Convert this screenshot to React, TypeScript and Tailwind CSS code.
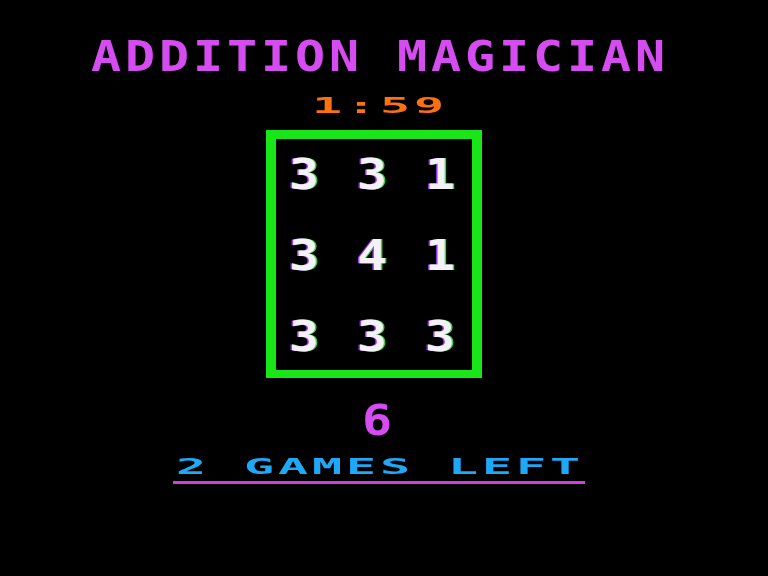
import React from "react";

const mono = "font-['DejaVu_Sans_Mono','Liberation_Mono',monospace] font-bold";

function Row({ text }: { text: string }) {
  return (
    <div className="h-[43px]">
      <div
        className={`${mono} origin-top scale-y-[0.86] text-[50px] leading-none tracking-[3.9px] text-[#f4f2f6] [text-shadow:-1.5px_0_0_#9a3cff,1.5px_0_0_#38d838] whitespace-pre`}
      >
        {text}
      </div>
    </div>
  );
}

export default function App() {
  return (
    <div className="w-[768px] h-[576px] bg-black overflow-hidden">
      <div className="flex flex-col items-center pr-[8px] blur-[0.4px]">
        <div className="mt-[35px] h-[43px]">
          <div
            className={`${mono} origin-top scale-y-[0.86] text-[50px] leading-none tracking-[3.9px] text-[#d54cf0] whitespace-pre`}
          >
            ADDITION MAGICIAN
          </div>
        </div>

        <div className="mt-[16.5px] h-[21.5px]">
          <div
            className={`${mono} origin-top scale-y-[0.43] text-[50px] leading-none tracking-[3.9px] text-[#ff7012]`}
          >
            1:59
          </div>
        </div>

        <div className="mt-[14px] mr-[12px] w-[216px] h-[248px] border-x-[10px] border-t-[9px] border-b-[8px] border-[#19e619] flex flex-col items-center pt-[14px] gap-[38px]">
          <Row text="3 3 1" />
          <Row text="3 4 1" />
          <Row text="3 3 3" />
        </div>

        <div className="mt-[21px] mr-[6px] h-[43px]">
          <div
            className={`${mono} origin-top scale-y-[0.86] text-[50px] leading-none text-[#d54cf0]`}
          >
            6
          </div>
        </div>

        <div className="mt-[13.5px] h-[21.5px]">
          <div
            className={`${mono} origin-top scale-y-[0.43] text-[50px] leading-none tracking-[3.9px] text-[#1ea8f5] whitespace-pre`}
          >
            2 GAMES LEFT
          </div>
        </div>

        <div className="mt-[4px] mr-[2px] w-[412px] h-[3px] bg-[#d03ee0]" />
      </div>
    </div>
  );
}
